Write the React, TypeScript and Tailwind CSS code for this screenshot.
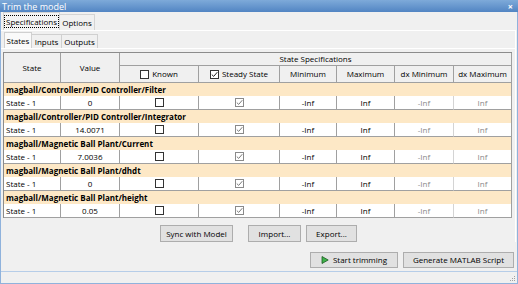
import React from "react";

const F = { fontFamily: '"Open Sans", "Noto Sans", sans-serif' };

function Box({ checked, dim }: { checked?: boolean; dim?: boolean }) {
  return (
    <span
      className={
        "inline-flex items-center justify-center w-[9px] h-[9px] bg-white border " +
        (dim ? "border-[#8a8a8a]" : "border-[#333333]")
      }
    >
      {checked && (
        <svg width="7" height="7" viewBox="0 0 7 7">
          <path d="M0.8 3.6 L2.7 5.4 L6.3 1.2" fill="none" stroke={dim ? "#7a7a7a" : "#222"} strokeWidth="1" />
        </svg>
      )}
    </span>
  );
}

const groups = [
  { name: "magball/Controller/PID Controller/Filter", value: "0" },
  { name: "magball/Controller/PID Controller/Integrator", value: "14.0071" },
  { name: "magball/Magnetic Ball Plant/Current", value: "7.0036" },
  { name: "magball/Magnetic Ball Plant/dhdt", value: "0" },
  { name: "magball/Magnetic Ball Plant/height", value: "0.05" },
];

export default function App() {
  const hc = "flex items-center justify-center border-r border-b border-[#a0a0a0] bg-[#f0f0f0]";
  const dc = "flex items-center justify-center h-[14px] border-r border-b border-[#a0a0a0] bg-white";
  return (
    <div style={F} className="w-[518px] h-[284px] flex flex-col text-[8px] leading-none text-black bg-[#f0f0f0]">
      {/* title bar */}
      <div className="h-[12px] flex items-center justify-between px-[2px] bg-gradient-to-b from-[#7eaad9] to-[#5285c3]">
        <span className="text-white text-[9px]">Trim the model</span>
        <span className="text-white text-[9px] font-bold mr-[3px]">×</span>
      </div>
      <div className="flex-1 flex flex-col border-x border-b border-[#8fb2dc]">
        {/* outer tabs */}
        <div className="h-[18px] flex items-end pl-[2px]">
          <div className="h-[18px] w-[57px] flex items-center justify-center bg-[#f4f4f4] border-t border-l border-r border-[#d4d4d4]">
            <span className="border border-dotted border-black px-[1px] h-[13px] flex items-center">Specifications</span>
          </div>
          <div className="h-[16px] w-[35px] flex items-center justify-center border-t border-r border-[#d4d4d4]">Options</div>
        </div>
        {/* outer panel */}
        <div className="flex flex-col border-t border-r border-white mr-[1px]">
          {/* inner tabs */}
          <div className="h-[17px] flex items-end pl-[3px]">
            <div className="h-[16px] w-[28px] flex items-center justify-center bg-[#fafafa] border-t border-l border-r border-[#d0d0d0]">States</div>
            <div className="h-[14px] w-[30px] flex items-center justify-center border-t border-r border-[#d0d0d0]">Inputs</div>
            <div className="h-[14px] w-[36px] flex items-center justify-center border-t border-r border-[#d0d0d0]">Outputs</div>
          </div>
          <div className="border-t border-white pt-[3px] pl-[2px]">
            <div className="w-[509px] border-t border-l border-[#8c8c8c] grid grid-cols-[57px_59px_79px_81px_57px_58px_59px_58px]">
              <div className={hc + " row-span-2"}>State</div>
              <div className={hc + " row-span-2"}>Value</div>
              <div className={hc + " col-span-6 h-[13px]"}>State Specifications</div>
              <div className={hc + " h-[17px] gap-[3px]"}>
                <Box /> <span>Known</span>
              </div>
              <div className={hc + " gap-[3px]"}>
                <Box checked /> <span>Steady State</span>
              </div>
              <div className={hc}>Minimum</div>
              <div className={hc}>Maximum</div>
              <div className={hc}>dx Minimum</div>
              <div className={hc}>dx Maximum</div>
              {groups.map((g) => (
                <React.Fragment key={g.name}>
                  <div className="col-span-8 h-[13px] flex items-center pl-[2px] bg-[#fde8c6] border-r border-[#a0a0a0] font-bold">
                    {g.name}
                  </div>
                  <div className={dc + " justify-start pl-[2px]"}>State - 1</div>
                  <div className={dc}>{g.value}</div>
                  <div className={dc}>
                    <Box />
                  </div>
                  <div className={dc}>
                    <Box checked dim />
                  </div>
                  <div className={dc}>-Inf</div>
                  <div className={dc}>Inf</div>
                  <div className={dc + " text-[#8a8a8a] border-r-[#d4d4d4]"}>-Inf</div>
                  <div className={dc + " text-[#8a8a8a] bg-[#f8f8f8]"}>Inf</div>
                </React.Fragment>
              ))}
            </div>
          </div>
          {/* buttons row 1 */}
          <div className="h-[17px] mt-[7px] flex pl-[159px]">
            <button className="w-[73px] h-[17px] bg-[#e1e1e1] border border-[#adadad] flex items-center justify-center">Sync with Model</button>
            <button className="ml-[15px] w-[53px] h-[17px] bg-[#e1e1e1] border border-[#adadad] flex items-center justify-center">Import...</button>
            <button className="ml-[5px] w-[51px] h-[17px] bg-[#e1e1e1] border border-[#adadad] flex items-center justify-center">Export...</button>
          </div>
        </div>
        {/* bottom row */}
        <div className="h-[16px] mt-[10px] flex justify-end pr-[3px] gap-[5px]">
          <button className="w-[88px] h-[16px] bg-[#e1e1e1] border border-[#adadad] flex items-center justify-center gap-[4px]">
            <svg width="8" height="8" viewBox="0 0 8 8">
              <path d="M1 0.5 L7.2 4 L1 7.5 Z" fill="#3fb24a" stroke="#1d5a22" strokeWidth="0.8" />
            </svg>
            <span>Start trimming</span>
          </button>
          <button className="w-[111px] h-[16px] bg-[#e1e1e1] border border-[#adadad] flex items-center justify-center">Generate MATLAB Script</button>
        </div>
        <div className="flex-1" />
        {/* status bar */}
        <div className="h-[12px] border-t border-[#b6cde8] flex justify-end items-end pr-[1px] pb-[1px]">
          <svg width="7" height="7" viewBox="0 0 7 7">
            <rect x="5" y="1" width="1" height="1" fill="#a0a0a0" />
            <rect x="3" y="3" width="1" height="1" fill="#a0a0a0" />
            <rect x="5" y="3" width="1" height="1" fill="#a0a0a0" />
            <rect x="1" y="5" width="1" height="1" fill="#a0a0a0" />
            <rect x="3" y="5" width="1" height="1" fill="#a0a0a0" />
            <rect x="5" y="5" width="1" height="1" fill="#a0a0a0" />
          </svg>
        </div>
      </div>
    </div>
  );
}
